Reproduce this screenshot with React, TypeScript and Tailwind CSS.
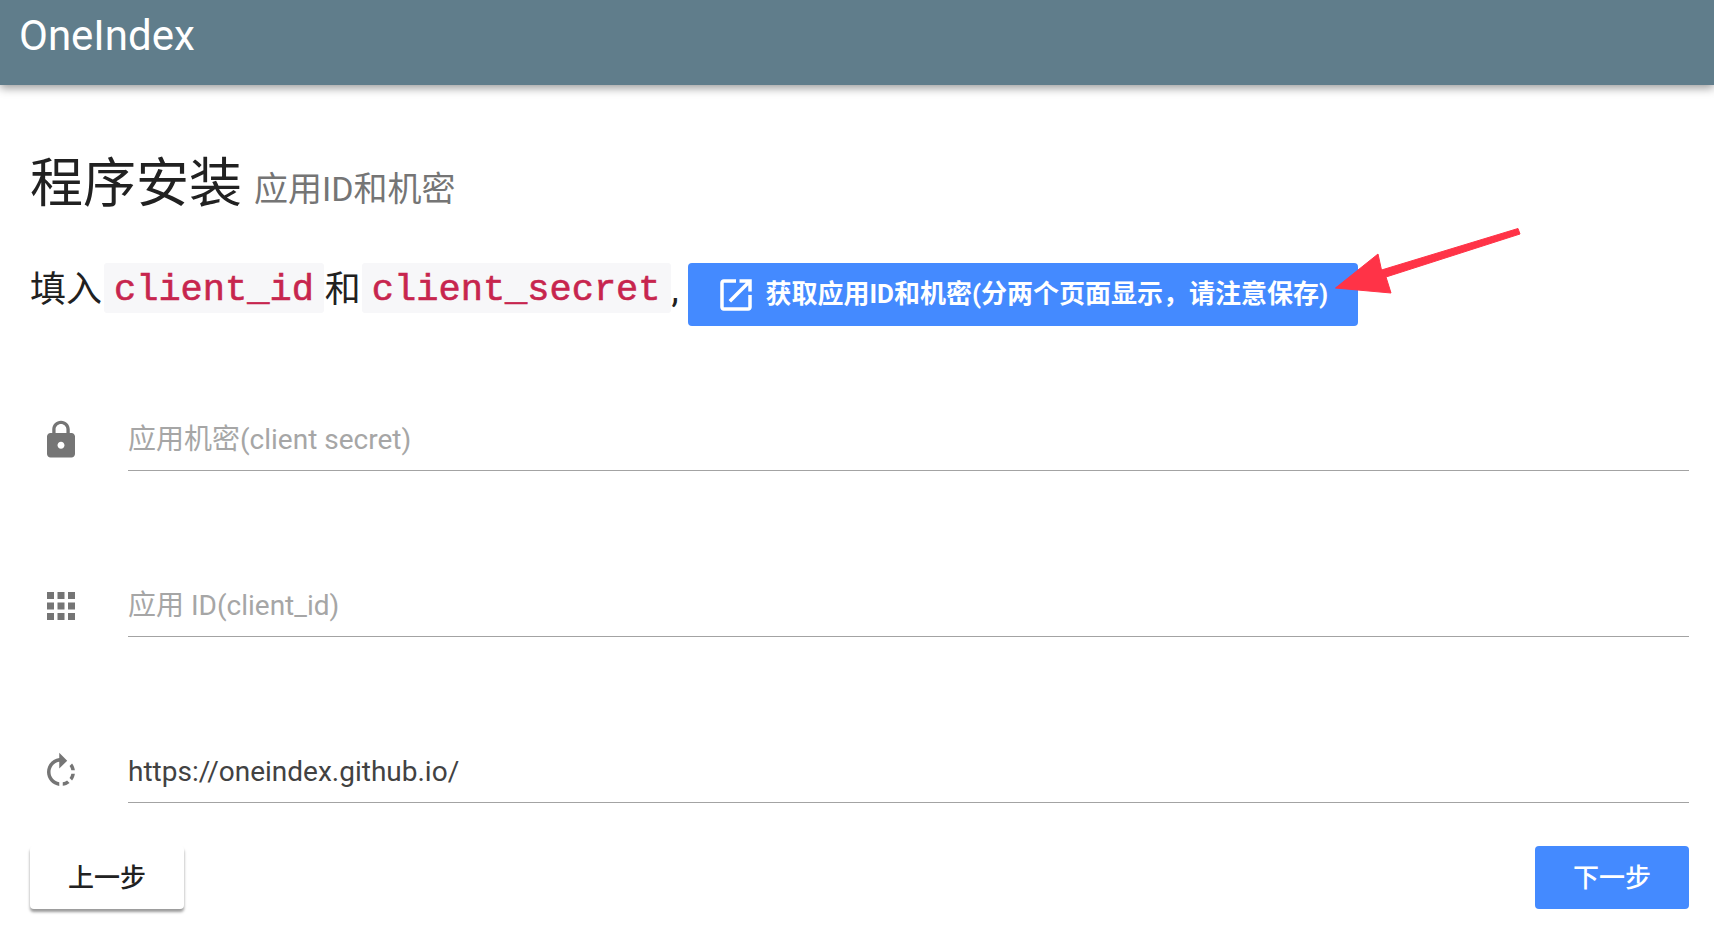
const iconPaths = {
  lock: 'M18 8h-1V6c0-2.76-2.24-5-5-5S7 3.24 7 6v2H6c-1.1 0-2 .9-2 2v10c0 1.1.9 2 2 2h12c1.1 0 2-.9 2-2V10c0-1.1-.9-2-2-2zm-6 9c-1.1 0-2-.9-2-2s.9-2 2-2 2 .9 2 2-.9 2-2 2zm3.1-9H8.9V6c0-1.71 1.39-3.1 3.1-3.1 1.71 0 3.1 1.39 3.1 3.1v2z',
  apps: 'M4 8h4V4H4v4zm6 12h4v-4h-4v4zm-6 0h4v-4H4v4zm0-6h4v-4H4v4zm6 0h4v-4h-4v4zm6-10v4h4V4h-4zm-6 4h4V4h-4v4zm6 6h4v-4h-4v4zm0 6h4v-4h-4v4z',
  rotate:
    'M15.55 5.55L11 1v3.07C7.06 4.56 4 7.92 4 12s3.05 7.44 7 7.93v-2.02c-2.84-.48-5-2.94-5-5.91s2.16-5.43 5-5.91V10l4.55-4.45zM19.93 11c-.17-1.39-.72-2.73-1.62-3.89l-1.42 1.42c.54.75.88 1.6 1.02 2.47h2.02zM13 17.9v2.02c1.39-.17 2.74-.71 3.9-1.61l-1.44-1.44c-.75.54-1.59.89-2.46 1.03zm3.89-2.42l1.42 1.41c.9-1.16 1.45-2.5 1.62-3.89h-2.02c-.14.87-.48 1.72-1.02 2.48z',
  open: 'M19 19H5V5h7V3H5c-1.11 0-2 .9-2 2v14c0 1.1.89 2 2 2h14c1.1 0 2-.9 2-2v-7h-2v7zM14 3v2h3.59l-9.83 9.83 1.41 1.41L19 6.41V10h2V3h-7z',
};

function Icon({ d, className }: { d: string; className: string }) {
  return (
    <svg viewBox="0 0 24 24" fill="currentColor" className={className}>
      <path d={d} />
    </svg>
  );
}

function Field({
  icon,
  placeholder,
  value,
}: {
  icon: string;
  placeholder?: string;
  value?: string;
}) {
  return (
    <div className="flex h-[63px] items-center">
      <div className="flex w-[98px] shrink-0 justify-start pl-[10px]">
        <Icon d={icon} className="h-[42px] w-[42px] text-[#757575]" />
      </div>
      <input
        readOnly
        placeholder={placeholder}
        defaultValue={value}
        className="h-full min-w-0 flex-1 border-b border-[#a3a3a3] bg-transparent text-[28px] text-[#424242] outline-none placeholder:text-[#a6a6a6]"
      />
    </div>
  );
}

function Code({ children }: { children: string }) {
  return (
    <code className="mx-px flex h-[50px] items-center rounded-[3px] bg-[#f7f7f9] px-[10px] pt-[6px] font-['Liberation_Mono',monospace] text-[37px] text-[#c7254e] [-webkit-text-stroke:0.6px_#c7254e]">
      {children}
    </code>
  );
}

export default function App() {
  return (
    <div className="relative min-h-[951px] bg-white font-['Roboto','Noto_Sans_CJK_SC',sans-serif] text-[#212121]">
      <header className="flex h-[85px] items-start bg-[#607d8b] pl-[19px] pt-[12px] shadow-[0_3px_9px_rgba(0,0,0,0.4)]">
        <span className="text-[42px] leading-[47px] text-white">OneIndex</span>
      </header>

      <main className="pl-[30px] pr-[25px]">
        <h1 className="mt-[69px] flex h-[60px] items-center gap-[12px] text-[53px] leading-[60px] font-normal">
          程序安装
          <small className="mt-[10px] text-[34px] leading-[50px] text-[#757575]">应用ID和机密</small>
        </h1>

        <div className="mt-[49px] flex h-[63px] items-start text-[36px]">
          <span className="flex h-[50px] w-[73px] items-center pt-[4px]">填入</span>
          <Code>client_id</Code>
          <span className="flex h-[50px] items-center pt-[4px]">和</span>
          <Code>client_secret</Code>
          <span className="flex h-[50px] w-[16px] items-center pt-[4px]">,</span>
          <button className="flex h-[63px] w-[670px] items-center rounded-[4px] bg-[#448aff] pl-[27px] text-[26px] font-bold text-white">
            <Icon d={iconPaths.open} className="mr-[9px] h-[42px] w-[42px] shrink-0" />
            <span className="whitespace-nowrap">获取应用ID和机密(分两个页面显示，请注意保存)</span>
          </button>
        </div>

        <div className="mt-[82px] flex flex-col gap-[103px]">
          <Field icon={iconPaths.lock} placeholder="应用机密(client secret)" />
          <Field icon={iconPaths.apps} placeholder="应用 ID(client_id)" />
          <Field icon={iconPaths.rotate} value="https://oneindex.github.io/" />
        </div>

        <div className="mt-[43px] flex justify-between">
          <button className="h-[63px] w-[154px] rounded-[4px] bg-white pt-[2px] text-[26px] font-medium text-[#212121] shadow-[0_3px_3px_rgba(0,0,0,0.4)]">
            上一步
          </button>
          <button className="h-[63px] w-[154px] rounded-[4px] bg-[#448aff] pt-[2px] text-[26px] font-medium text-white">
            下一步
          </button>
        </div>
      </main>

      {/* red annotation arrow drawn over the button */}
      <svg className="pointer-events-none absolute left-[1325px] top-[220px] h-[85px] w-[205px]" viewBox="1325 220 205 85">
        <path
          d="M1335.5 288 L1378 254 L1381.5 270 L1518 228.5 L1520 234 L1386 277 L1391 293 Z"
          fill="#ff3347"
          stroke="#ff3347"
          strokeWidth="1"
          strokeLinejoin="round"
        />
      </svg>
    </div>
  );
}
